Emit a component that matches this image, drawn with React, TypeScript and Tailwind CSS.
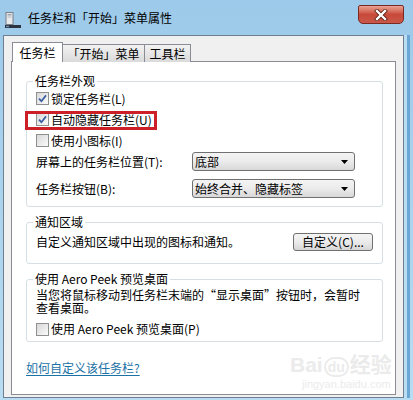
import React from 'react';

const Check = ({ checked }: { checked?: boolean }) => (
  <span className="w-[13px] h-[13px] border border-[#8e8f8f] bg-gradient-to-br from-[#d8d8d8] to-[#fbfbfb] flex items-center justify-center shrink-0">
    {checked && (
      <svg width="9" height="9" viewBox="0 0 9 9">
        <path d="M1 4.6 L3.4 7.2 L8 1.4" fill="none" stroke="#3b5ea3" strokeWidth="1.7" />
      </svg>
    )}
  </span>
);

const Select = ({ value }: { value: string }) => (
  <div className="w-[163px] h-[19px] border border-[#707070] rounded-[3px] bg-gradient-to-b from-[#f4f4f4] via-[#ebebeb] to-[#d8d8d8] flex items-center pl-[2px] pr-[6px]">
    <span className="flex-1 leading-[14px]">{value}</span>
    <svg width="7" height="4" viewBox="0 0 7 4">
      <path d="M0 0 H7 L3.5 4 Z" fill="#000" />
    </svg>
  </div>
);

const Group = ({ title, children, className = '' }: { title: string; children: React.ReactNode; className?: string }) => (
  <fieldset className={`ml-[14px] mr-[12px] border border-[#d5dfe5] rounded-[3px] pl-[9px] pr-[9px] ${className}`}>
    <legend className="px-[2px] -ml-[3px] leading-[14px]">{title}</legend>
    {children}
  </fieldset>
);

export default function App() {
  return (
    <div className="w-[413px] h-[400px] overflow-hidden bg-gradient-to-b from-[#9dcaea] to-[#b8dcf2] font-['Noto_Sans_CJK_SC',sans-serif] text-[12px] text-black relative">
      {/* title bar */}
      <div className="h-[35px] flex items-start">
        <svg width="16" height="16" viewBox="0 0 16 16" className="ml-[5px] mt-[12px]">
          <rect x="1" y="0.5" width="7" height="12" fill="#e8eaec" stroke="#7a7f86" />
          <rect x="2.5" y="2" width="4" height="1.5" fill="#9aa3ad" />
          <rect x="2.5" y="4.5" width="4" height="1" fill="#b5bcc4" />
          <rect x="0" y="13" width="16" height="3" fill="#2d3440" />
          <rect x="1" y="13.8" width="3" height="1.4" fill="#6d8fb8" />
        </svg>
        <span className="ml-[7px] mt-[11px] leading-[14px]">任务栏和「开始」菜单属性</span>
        <div className="ml-auto mr-[9px] mt-[5px] w-[46px] h-[19px] rounded-b-[5px] rounded-t-[2px] border border-[#7b2a22] bg-gradient-to-b from-[#e9a394] via-[#c8493a] to-[#c9584a] flex items-center justify-center">
          <svg width="14" height="12" viewBox="0 0 14 12">
            <path d="M3 2 L11 10 M11 2 L3 10" stroke="#5b1d16" strokeWidth="4" strokeLinecap="square" />
            <path d="M3 2 L11 10 M11 2 L3 10" stroke="#ffffff" strokeWidth="2.4" strokeLinecap="square" />
          </svg>
        </div>
      </div>

      {/* client area */}
      <div className="ml-[3px] w-[401px] h-[363px] border border-[#6e7f92] bg-[#f0f0f0] pt-[6px] shadow-[3px_0_0_0_#b9ddf3,6px_0_0_0_#6aa7d6]">
        {/* tabs */}
        <div className="flex items-end ml-[8px] h-[20px] relative z-10">
          <div className="w-[51px] h-[20px] border border-b-0 border-[#898c95] bg-white flex items-center justify-center leading-[14px]">
            任务栏
          </div>
          <div className="w-[82px] h-[18px] border border-l-0 border-b-0 border-[#898c95] bg-gradient-to-b from-[#f2f2f2] to-[#dadada] flex items-center justify-center leading-[14px]">
            「开始」菜单
          </div>
          <div className="w-[46px] h-[18px] border border-l-0 border-b-0 border-[#898c95] bg-gradient-to-b from-[#f2f2f2] to-[#dadada] flex items-center justify-center leading-[14px]">
            工具栏
          </div>
        </div>

        {/* panel */}
        <div className="ml-[7px] w-[385px] h-[334px] -mt-px border border-[#898c95] bg-white pt-[12px] relative">
          <Group title="任务栏外观" className="pb-[8px]">
            <div className="h-[21px] flex items-center gap-[2px]">
              <Check checked />
              <span className="leading-[14px]">锁定任务栏(L)</span>
            </div>
            <div className="h-[21px] flex items-center gap-[2px] relative">
              <Check checked />
              <span className="leading-[14px]">自动隐藏任务栏(U)</span>
              <div className="absolute -left-[11px] top-[2px] w-[132px] h-[19px] border-[3px] border-[#cc1f28]" />
            </div>
            <div className="h-[21px] flex items-center gap-[2px]">
              <Check />
              <span className="leading-[14px]">使用小图标(I)</span>
            </div>
            <div className="mt-[1px] h-[19px] flex items-center">
              <span className="w-[156px] leading-[14px]">屏幕上的任务栏位置(T):</span>
              <Select value="底部" />
            </div>
            <div className="mt-[8px] h-[19px] flex items-center">
              <span className="w-[156px] leading-[14px]">任务栏按钮(B):</span>
              <Select value="始终合并、隐藏标签" />
            </div>
          </Group>

          <Group title="通知区域" className="mt-[8px] pb-[12px]">
            <div className="mt-[4px] h-[18px] flex items-center justify-between">
              <span className="leading-[14px]">自定义通知区域中出现的图标和通知。</span>
              <div className="w-[80px] h-[18px] border border-[#707070] rounded-[3px] bg-gradient-to-b from-[#f4f4f4] via-[#ebebeb] to-[#d6d6d6] flex items-center justify-center leading-[14px]">
                自定义(C)...
              </div>
            </div>
          </Group>

          <Group title="使用 Aero Peek 预览桌面" className="mt-[8px] pb-[2px]">
            <p className="mt-[2px] leading-[13px]">
              当您将鼠标移动到任务栏末端的“显示桌面”按钮时，会暂时
              <br />
              查看桌面。
            </p>
            <div className="mt-[5px] h-[20px] flex items-center gap-[2px]">
              <Check />
              <span className="leading-[14px]">使用 Aero Peek 预览桌面(P)</span>
            </div>
          </Group>

          <div className="mt-[19px] ml-[14px] h-[14px] leading-[14px] text-[#1b72a4] underline underline-offset-2">
            如何自定义该任务栏?
          </div>

          {/* watermark */}
          <div className="absolute left-[278px] top-[291px] text-[#ebebeb] leading-none pointer-events-none">
            <div className="text-[21px] font-bold font-['Liberation_Sans',sans-serif]">
              Bai<span className="text-[14px] border-2 border-[#ebebeb] rounded-full px-[2px] mx-[1px]">du</span>
              <span className="font-['Noto_Sans_CJK_SC',sans-serif]">经验</span>
            </div>
            <div className="text-[11px] mt-[4px] ml-[12px] font-['Liberation_Sans',sans-serif]">jingyan.baidu.com</div>
          </div>
        </div>
      </div>
    </div>
  );
}
